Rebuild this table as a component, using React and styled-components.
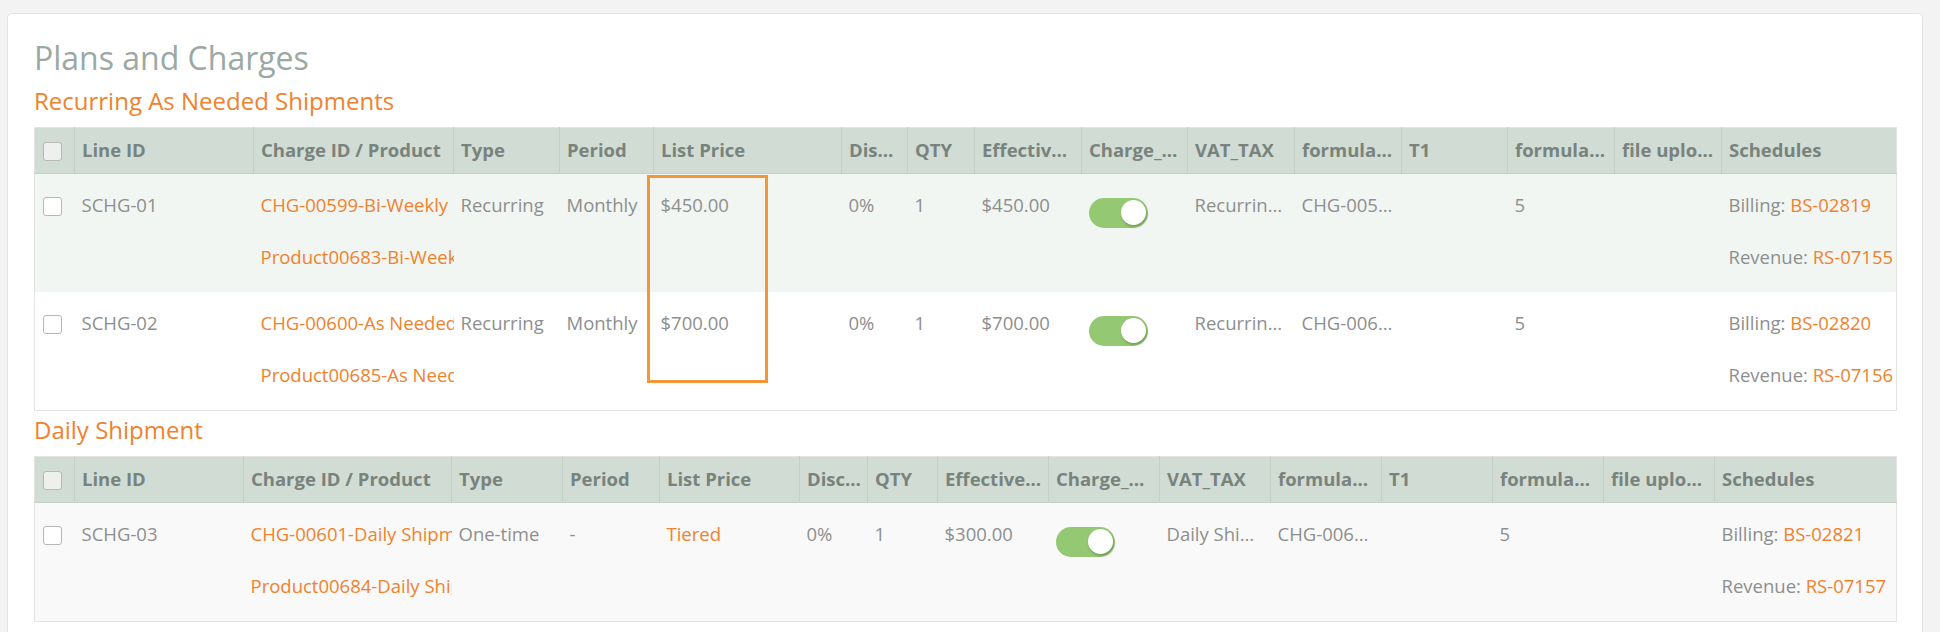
import React from "react";
import styled, { createGlobalStyle } from "styled-components";

const colors = {
  page: "#f3f3f3",
  border: "#e3e3e3",
  title: "#9aa9a3",
  orange: "#f0822d",
  headBg: "#d1dcd4",
  headLine: "#c3cfc7",
  headText: "#79837e",
  text: "#8d8f8e",
  rowTint: "#f2f6f3",
  rowGray: "#f9f9f9",
  toggle: "#95c873",
};

const GlobalStyle = createGlobalStyle`
  html, body {
    margin: 0;
    padding: 0;
    background: ${colors.page};
    font-family: "Open Sans", "DejaVu Sans", sans-serif;
    overflow: hidden;
  }
`;

const Page = styled.div`
  padding: 13px 17px 0 7px;
`;

const Card = styled.div`
  background: #fff;
  border: 1px solid ${colors.border};
  border-radius: 5px;
  padding: 24px 26px 40px;
`;

const Title = styled.h1`
  margin: 0 0 8px;
  font-size: 32px;
  line-height: 40px;
  font-weight: 400;
  color: ${colors.title};
`;

const Section = styled.section`
  position: relative;
  & + & {
    margin-top: 4px;
  }
`;

const SectionTitle = styled.h2`
  margin: 0 0 11px;
  font-size: 24px;
  line-height: 30px;
  font-weight: 400;
  color: ${colors.orange};
`;

const Table = styled.table`
  width: 1862px;
  table-layout: fixed;
  border-collapse: collapse;
  border: 1px solid ${colors.border};
  font-size: 18.5px;
`;

const HeadCell = styled.th`
  height: 46px;
  padding: 0 6px 3px 7px;
  box-sizing: border-box;
  background: ${colors.headBg};
  border-right: 1px solid ${colors.headLine};
  border-bottom: 1px solid ${colors.headLine};
  color: ${colors.headText};
  font-weight: 700;
  text-align: left;
  vertical-align: middle;
  white-space: nowrap;
  overflow: hidden;
  text-overflow: ellipsis;
  &:last-child {
    border-right: none;
  }
`;

const Row = styled.tr`
  background: ${(p) => p.$bg || "#fff"};
`;

const Cell = styled.td`
  padding: 12px 7px 16px;
  line-height: 38px;
  vertical-align: top;
  color: ${colors.text};
  white-space: nowrap;
  overflow: hidden;
  text-overflow: ${(p) => (p.$clip ? "clip" : "ellipsis")};
`;

const Stack = styled.div`
  display: flex;
  flex-direction: column;
  gap: 14px;
`;

const Line = styled.div`
  height: 38px;
  line-height: 38px;
  color: ${(p) => (p.$link ? colors.orange : colors.text)};
`;

const Link = styled.span`
  color: ${colors.orange};
`;

const Check = styled.span`
  display: block;
  width: 19px;
  height: 19px;
  box-sizing: border-box;
  margin: ${(p) => (p.$head ? "4px 0 0 1px" : "11px 0 0 1px")};
  border: 1px solid #b4b8b6;
  border-radius: 3px;
  background: ${(p) => (p.$head ? "#eef0ee" : "#fff")};
`;

const Toggle = styled.span`
  display: flex;
  justify-content: flex-end;
  align-items: center;
  width: 59px;
  height: 30px;
  margin-top: 12px;
  padding: 0 2px 1px;
  box-sizing: border-box;
  border-radius: 15px;
  background: ${colors.toggle};
`;

const Knob = styled.span`
  width: 25px;
  height: 25px;
  border-radius: 50%;
  background: #fff;
  box-shadow: 1px 2px 3px rgba(0, 0, 0, 0.22);
`;

const Highlight = styled.div`
  position: absolute;
  left: 613px;
  top: 89px;
  width: 121px;
  height: 208px;
  box-sizing: border-box;
  border: 3px solid #f29637;
  pointer-events: none;
`;

const headers = [
  "Line ID", "Charge ID / Product", "Type", "Period", "List Price", "Discount",
  "QTY", "Effective Price", "Charge_Active", "VAT_TAX", "formula_field", "T1",
  "formula_number", "file upload", "Schedules",
];

const widthsA = [40, 179, 200, 106, 94, 188, 66, 67, 107, 106, 107, 107, 106, 107, 107, 175];
const widthsB = [40, 169, 208, 111, 97, 140, 68, 70, 111, 111, 111, 111, 111, 111, 111, 182];

const sections = [
  {
    title: "Recurring As Needed Shipments",
    widths: widthsA,
    highlight: true,
    rows: [
      {
        bg: colors.rowTint,
        id: "SCHG-01",
        charge: "CHG-00599-Bi-Weekly",
        product: "Product00683-Bi-Weekly Shipment",
        type: "Recurring",
        period: "Monthly",
        price: "$450.00",
        eff: "$450.00",
        vat: "Recurring As Needed",
        formula: "CHG-00599-Bi-Weekly",
        billing: "BS-02819",
        revenue: "RS-07155",
      },
      {
        bg: "#fff",
        id: "SCHG-02",
        charge: "CHG-00600-As Needed Shipment",
        product: "Product00685-As Needed Shipment",
        type: "Recurring",
        period: "Monthly",
        price: "$700.00",
        eff: "$700.00",
        vat: "Recurring As Needed",
        formula: "CHG-00600-As Needed",
        billing: "BS-02820",
        revenue: "RS-07156",
      },
    ],
  },
  {
    title: "Daily Shipment",
    widths: widthsB,
    rows: [
      {
        bg: colors.rowGray,
        id: "SCHG-03",
        charge: "CHG-00601-Daily Shipment",
        product: "Product00684-Daily Shipment",
        type: "One-time",
        period: "-",
        price: "Tiered",
        priceLink: true,
        eff: "$300.00",
        vat: "Daily Shipment",
        formula: "CHG-00601-Daily Shipment",
        billing: "BS-02821",
        revenue: "RS-07157",
      },
    ],
  },
];

function ChargeRow({ row }) {
  return (
    <Row $bg={row.bg}>
      <Cell><Check /></Cell>
      <Cell>{row.id}</Cell>
      <Cell $clip>
        <Stack>
          <Line $link>{row.charge}</Line>
          <Line $link>{row.product}</Line>
        </Stack>
      </Cell>
      <Cell>{row.type}</Cell>
      <Cell>{row.period}</Cell>
      <Cell>{row.priceLink ? <Link>{row.price}</Link> : row.price}</Cell>
      <Cell>0%</Cell>
      <Cell>1</Cell>
      <Cell>{row.eff}</Cell>
      <Cell>
        <Toggle><Knob /></Toggle>
      </Cell>
      <Cell>{row.vat}</Cell>
      <Cell>{row.formula}</Cell>
      <Cell></Cell>
      <Cell>5</Cell>
      <Cell></Cell>
      <Cell $clip>
        <Stack>
          <Line>Billing: <Link>{row.billing}</Link></Line>
          <Line>Revenue: <Link>{row.revenue}</Link></Line>
        </Stack>
      </Cell>
    </Row>
  );
}

function ChargeTable({ section }) {
  return (
    <Section>
      <SectionTitle>{section.title}</SectionTitle>
      <Table>
        <colgroup>
          {section.widths.map((w, i) => (
            <col key={i} style={{ width: w }} />
          ))}
        </colgroup>
        <thead>
          <tr>
            <HeadCell><Check $head /></HeadCell>
            {headers.map((h) => (
              <HeadCell key={h}>{h}</HeadCell>
            ))}
          </tr>
        </thead>
        <tbody>
          {section.rows.map((row) => (
            <ChargeRow key={row.id} row={row} />
          ))}
        </tbody>
      </Table>
      {section.highlight && <Highlight />}
    </Section>
  );
}

export default function App() {
  return (
    <>
      <GlobalStyle />
      <Page>
        <Card>
          <Title>Plans and Charges</Title>
          {sections.map((s) => (
            <ChargeTable key={s.title} section={s} />
          ))}
        </Card>
      </Page>
    </>
  );
}
